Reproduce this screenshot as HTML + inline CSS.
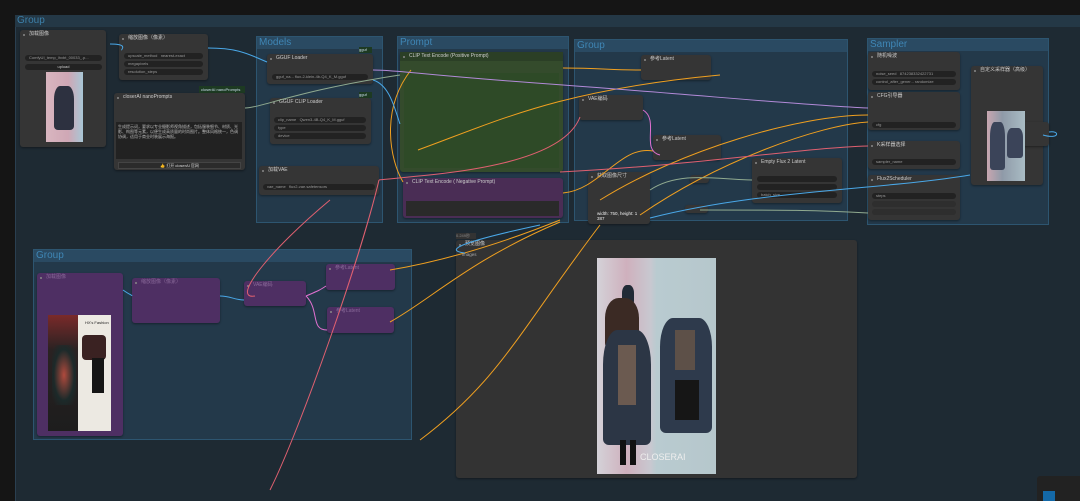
<!DOCTYPE html>
<html><head><meta charset="utf-8"><style>
*{margin:0;padding:0;box-sizing:border-box}
body{width:1080px;height:501px;overflow:hidden;background:#151515;font-family:"Liberation Sans","Noto Sans CJK SC",sans-serif;position:relative;color:#bbb}
.a{position:absolute}
.grp{position:absolute;background:#23394a;border:1px solid #2d5570}
.grp>.h{height:12px;background:#2a4a62;color:#3f86b5;font-size:10px;line-height:12px;padding-left:2px}
.n{position:absolute;background:#353535;border-radius:3px;box-shadow:0 1px 2px #0006;font-size:4.5px;color:#aaa}
.n>.t{height:9px;line-height:9px;padding-left:9px;font-size:5px;color:#ccc;position:relative}
.n>.t:before{content:"";position:absolute;left:3px;top:3.5px;width:2px;height:2px;border-radius:50%;background:#888}
.w{position:absolute;left:4px;right:4px;height:6px;background:#222;border-radius:3px;font-size:4px;line-height:6px;color:#999;padding:0 4px}
.p{background:#4e2f63}
.p>.t{color:#8a6a9a}
svg{position:absolute;left:0;top:0}
</style></head><body>
<div class="a" style="left:15px;top:15px;width:1065px;height:486px;background:#1e2a33;border-left:1px solid #2a3f50"></div>
<div class="a" style="left:15px;top:15px;width:1065px;height:12px;background:#243846;color:#3c7fa8;font-size:10px;line-height:12px;padding-left:2px">Group</div>

<div class="grp" style="left:256px;top:36px;width:127px;height:187px"><div class="h">Models</div></div>
<div class="grp" style="left:397px;top:36px;width:172px;height:187px"><div class="h">Prompt</div></div>
<div class="grp" style="left:574px;top:39px;width:274px;height:182px"><div class="h">Group</div></div>
<div class="grp" style="left:867px;top:38px;width:182px;height:187px"><div class="h">Sampler</div></div>
<div class="grp" style="left:33px;top:249px;width:379px;height:191px"><div class="h">Group</div></div>

<!-- preview node -->
<div class="a" style="left:456px;top:233px;width:20px;height:6px;background:#333;font-size:4px;color:#888">0.249秒</div>
<div class="n" style="left:456px;top:240px;width:401px;height:238px;background:#333"><div class="t">预览图像</div><div class="a" style="left:6px;top:12px">images</div></div>
<div class="a" style="left:597px;top:258px;width:119px;height:216px;background:linear-gradient(90deg,#d4d2d8 0,#cfb0bd 25%,#c8c8d0 45%,#b9cbd0 50%,#b6c7cc 100%)"></div>
<div class="a" style="left:622px;top:285px;width:12px;height:20px;background:#222a36;border-radius:40% 40% 20% 20%"></div>
<div class="a" style="left:605px;top:298px;width:34px;height:50px;background:#3b2a24;border-radius:40% 40% 10% 10%"></div>
<div class="a" style="left:603px;top:330px;width:48px;height:115px;background:#2c3645;border-radius:30% 30% 6px 6px"></div>
<div class="a" style="left:618px;top:345px;width:18px;height:60px;background:#6b5a50"></div>
<div class="a" style="left:620px;top:440px;width:6px;height:25px;background:#111"></div>
<div class="a" style="left:630px;top:440px;width:6px;height:25px;background:#111"></div>
<div class="a" style="left:660px;top:318px;width:52px;height:115px;background:#2e3a4c;border-radius:25% 25% 6px 6px"></div>
<div class="a" style="left:675px;top:330px;width:20px;height:40px;background:#5d5048"></div>
<div class="a" style="left:675px;top:380px;width:24px;height:40px;background:#161616"></div>
<div class="a" style="left:640px;top:452px;color:#eee;font-size:9px">CLOSERAI</div>

<!-- top left nodes -->
<div class="n" style="left:20px;top:30px;width:86px;height:117px"><div class="t">加载图像</div></div>
<div class="a" style="left:46px;top:72px;width:37px;height:70px;background:linear-gradient(90deg,#d9b6c0,#cfa7b5 60%,#a9c7d6);"></div>
<div class="a" style="left:54px;top:86px;width:20px;height:44px;background:#2d3140;border-radius:30% 30% 4px 4px"></div>
<div class="w" style="left:25px;top:55px;width:77px">ComfyUI_temp_lhxbt_00033_.p...</div>
<div class="w" style="left:25px;top:64px;width:77px;text-align:center;color:#ccc">upload</div>
<div class="n" style="left:119px;top:34px;width:89px;height:46px"><div class="t">缩放图像（像素）</div></div>
<div class="w" style="left:124px;top:53px;width:79px">upscale_method &nbsp; nearest-exact</div>
<div class="w" style="left:124px;top:61px;width:79px">megapixels</div>
<div class="w" style="left:124px;top:69px;width:79px">resolution_steps</div>
<div class="a" style="left:199px;top:86px;width:46px;height:7px;background:#1d3a22;color:#cde;font-size:4px;line-height:7px;padding-left:2px">closerAI nanoPrompts</div>
<div class="n" style="left:114px;top:93px;width:131px;height:77px"><div class="t">closerAI nanoPrompts</div></div>
<div class="a" style="left:116px;top:122px;width:126px;height:37px;background:#222;font-size:4px;color:#bbb;padding:2px;line-height:5px">生成提示词，要求以专业摄影师视角描述，包括服装细节、材质、光影、构图等元素，以便生成高质量的时尚图片。整体风格统一，色调协调，适用于商业时装展示海报。</div>
<div class="a" style="left:118px;top:162px;width:123px;height:7px;background:#2b2b2b;border:1px solid #444;font-size:4px;text-align:center;color:#ddd;line-height:5px">👍 打开 closerAI 官网</div>

<!-- models nodes -->
<div class="a" style="left:359px;top:47px;width:13px;height:6px;background:#1d3a22;font-size:4px;color:#cde">gguf</div>
<div class="n" style="left:267px;top:54px;width:106px;height:30px"><div class="t">GGUF Loader</div></div>
<div class="w" style="left:272px;top:74px;width:96px">gguf_na... flux-2-klein-4b-Q4_K_M.gguf</div>
<div class="a" style="left:359px;top:92px;width:13px;height:6px;background:#1d3a22;font-size:4px;color:#cde">gguf</div>
<div class="n" style="left:270px;top:98px;width:101px;height:46px"><div class="t">GGUF CLIP Loader</div></div>
<div class="w" style="left:274px;top:117px;width:92px">clip_name &nbsp; Qwen3-4B-Q4_K_M.gguf</div>
<div class="w" style="left:274px;top:125px;width:92px">type</div>
<div class="w" style="left:274px;top:133px;width:92px">device</div>
<div class="n" style="left:259px;top:166px;width:120px;height:29px"><div class="t">加载VAE</div></div>
<div class="w" style="left:263px;top:184px;width:112px">vae_name &nbsp; flux2-vae.safetensors</div>

<!-- prompt nodes -->
<div class="n" style="left:400px;top:52px;width:163px;height:120px;background:#344b2c"><div class="t" style="background:#2b3f26">CLIP Text Encode (Positive Prompt)</div><div class="a" style="left:4px;top:21px;width:155px;height:95px;background:#2e4a27"></div></div>
<div class="n" style="left:403px;top:178px;width:160px;height:40px;background:#4a2d55"><div class="t">CLIP Text Encode ( Negative Prompt)</div><div class="a" style="left:3px;top:23px;width:153px;height:15px;background:#2a2a2a"></div></div>

<!-- middle nodes -->
<div class="n" style="left:641px;top:55px;width:70px;height:25px"><div class="t">参考Latent</div></div>
<div class="n" style="left:579px;top:95px;width:64px;height:25px"><div class="t">VAE编码</div></div>
<div class="n" style="left:653px;top:135px;width:68px;height:25px"><div class="t">参考Latent</div></div>
<div class="n" style="left:588px;top:172px;width:62px;height:52px"><div class="t">获取图像尺寸</div><div class="a" style="left:9px;top:39px;color:#eee;font-size:4.5px">width: 750, height: 1<br>387</div></div>
<div class="n" style="left:752px;top:158px;width:90px;height:45px"><div class="t">Empty Flux 2 Latent</div></div>
<div class="w" style="left:757px;top:176px;width:80px"></div>
<div class="w" style="left:757px;top:184px;width:80px"></div>
<div class="w" style="left:757px;top:192px;width:80px">batch_size</div>
<div class="n" style="left:690px;top:175px;width:19px;height:8px"></div>
<div class="n" style="left:685px;top:205px;width:23px;height:8px"></div>

<!-- sampler nodes -->
<div class="n" style="left:868px;top:52px;width:92px;height:38px"><div class="t">随机噪波</div></div>
<div class="w" style="left:872px;top:71px;width:84px">noise_seed &nbsp; 874238332422731</div>
<div class="w" style="left:872px;top:79px;width:84px">control_after_gener... randomize</div>
<div class="n" style="left:868px;top:92px;width:92px;height:38px"><div class="t">CFG引导器</div></div>
<div class="w" style="left:872px;top:122px;width:84px">cfg</div>
<div class="n" style="left:868px;top:141px;width:92px;height:28px"><div class="t">K采样器选择</div></div>
<div class="w" style="left:872px;top:159px;width:84px">sampler_name</div>
<div class="n" style="left:868px;top:175px;width:92px;height:45px"><div class="t">Flux2Scheduler</div></div>
<div class="w" style="left:872px;top:193px;width:84px">steps</div>
<div class="w" style="left:872px;top:201px;width:84px;background:#2e2e2e"></div>
<div class="w" style="left:872px;top:209px;width:84px;background:#2e2e2e"></div>
<div class="n" style="left:971px;top:66px;width:72px;height:119px"><div class="t">自定义采样器（高级）</div></div>
<div class="n" style="left:990px;top:122px;width:59px;height:24px"></div>
<div class="a" style="left:987px;top:111px;width:38px;height:70px;background:linear-gradient(90deg,#c8a6b0,#8f9aa8 40%,#a9bcc4)"></div>
<div class="a" style="left:990px;top:122px;width:15px;height:48px;background:#3b4459;border-radius:30% 30% 3px 3px"></div>
<div class="a" style="left:1007px;top:128px;width:16px;height:30px;background:#3b4459;border-radius:30% 30% 3px 3px"></div>

<!-- bottom purple nodes -->
<div class="n p" style="left:37px;top:273px;width:86px;height:163px"><div class="t">加载图像</div></div>
<div class="a" style="left:48px;top:315px;width:63px;height:116px;background:#ece9e2"></div>
<div class="a" style="left:48px;top:315px;width:30px;height:116px;background:linear-gradient(180deg,#7a2a2a 0,#2a2222 30%,#1d1d1d)"></div>
<div class="a" style="left:52px;top:345px;width:24px;height:60px;background:radial-gradient(ellipse,#b04a3d 0,#1c2a2a 60%,transparent 90%)"></div>
<div class="a" style="left:82px;top:335px;width:24px;height:25px;background:#3a2222;border-radius:4px"></div>
<div class="a" style="left:92px;top:358px;width:12px;height:35px;background:#151515"></div>
<div class="a" style="left:85px;top:320px;font-size:4px;color:#222">HX's Fashion</div>
<div class="n p" style="left:132px;top:278px;width:88px;height:45px"><div class="t">缩放图像（像素）</div></div>
<div class="n p" style="left:244px;top:281px;width:62px;height:25px"><div class="t">VAE编码</div></div>
<div class="n p" style="left:326px;top:264px;width:69px;height:26px"><div class="t">参考Latent</div></div>
<div class="n p" style="left:327px;top:307px;width:67px;height:26px"><div class="t">参考Latent</div></div>

<div class="a" style="left:1037px;top:476px;width:43px;height:25px;background:#222;border-radius:3px 0 0 0"></div>
<div class="a" style="left:1043px;top:491px;width:12px;height:10px;background:#1469a8"></div>

<svg width="1080" height="501" fill="none" stroke-width="1">
<g stroke="#f0a020">
<path d="M563 68 C600 68,610 70,641 70"/>
<path d="M411 70 C380 110,390 160,403 182"/>
<path d="M418 150 C500 120,560 90,720 75"/>
<path d="M563 193 C600 190,620 145,653 151"/>
<path d="M600 200 C680 150,800 115,868 115"/>
<path d="M640 215 C720 160,820 125,868 122"/>
<path d="M420 440 C500 380,520 330,600 225"/>
<path d="M390 322 C430 300,470 260,560 222"/>
<path d="M390 270 C450 260,510 240,560 220"/>
</g>
<g stroke="#b28ad8"><path d="M373 70 C400 70,420 75,563 85 C700 95,800 105,868 108"/></g>
<g stroke="#e06070"><path d="M379 180 C420 175,560 170,580 117"/><path d="M270 490 C300 430,360 260,379 180"/><path d="M560 172 C700 165,800 148,868 146"/><path d="M255 296 C230 300,270 250,330 200"/></g>
<g stroke="#4aa8e8"><path d="M110 44 C130 44,120 50,122 50"/><path d="M208 48 C240 48,250 55,267 62"/><path d="M373 80 C390 85,395 110,400 124"/><path d="M465 253 C440 250,470 240,540 225"/><path d="M650 218 C760 190,880 190,970 175"/><path d="M1043 135 C1060 140,1060 130,1049 132"/><path d="M123 290 C130 295,132 295,132 296"/><path d="M220 296 C230 296,235 300,244 300"/></g>
<g stroke="#90aa90"><path d="M245 108 C260 108,300 90,400 75"/><path d="M650 190 C680 170,720 180,752 180"/><path d="M700 210 C780 210,820 210,868 213"/></g>
<g stroke="#e070d0"><path d="M306 296 C320 290,320 290,326 286"/><path d="M306 296 C320 310,310 330,327 330"/><path d="M643 110 C660 120,640 150,660 155"/></g>
</svg>
</body></html>
